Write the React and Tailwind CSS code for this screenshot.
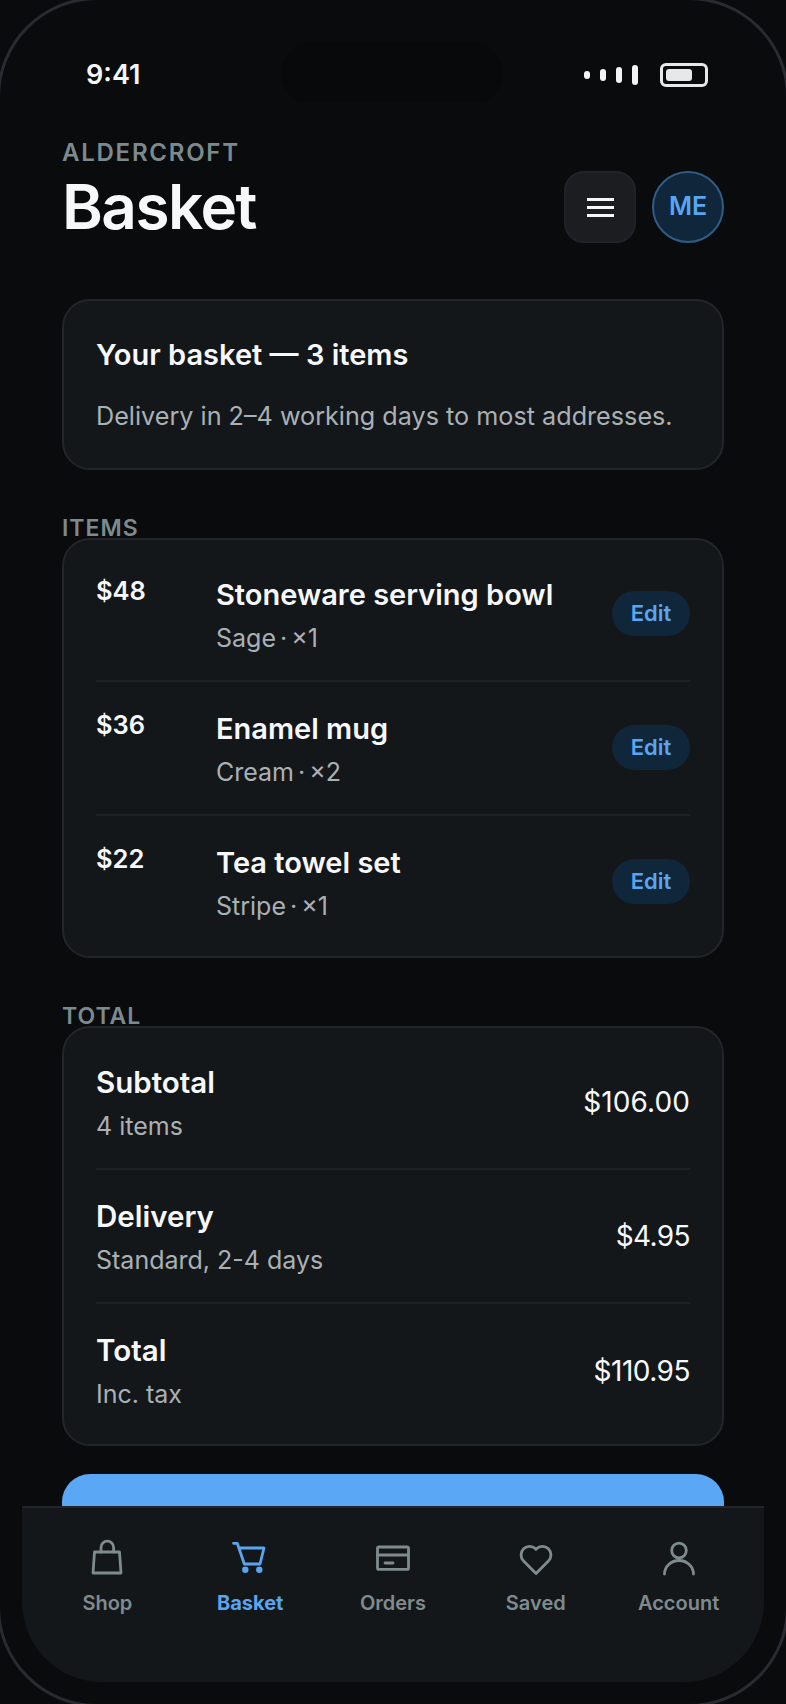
const items = [
  { price: "$48", name: "Stoneware serving bowl", meta: "Sage · ×1" },
  { price: "$36", name: "Enamel mug", meta: "Cream · ×2" },
  { price: "$22", name: "Tea towel set", meta: "Stripe · ×1" },
];

const totals = [
  { label: "Subtotal", meta: "4 items", value: "$106.00", track: "tracking-[0.1px]" },
  { label: "Delivery", meta: "Standard, 2-4 days", value: "$4.95", track: "tracking-[-0.6px]" },
  { label: "Total", meta: "Inc. tax", value: "$110.95", track: "tracking-[-0.5px]" },
];

function Icon({ children }) {
  return (
    <svg
      width="40"
      height="40"
      viewBox="0 0 40 40"
      fill="none"
      stroke="currentColor"
      strokeWidth="2.8"
      strokeLinecap="round"
      strokeLinejoin="round"
    >
      {children}
    </svg>
  );
}

const tabs = [
  {
    label: "Shop",
    icon: (
      <>
        <path d="M7.5 14H32.5L34 35H6Z" />
        <path d="M14 14V9.5a6.3 6.3 0 0 1 12.6 0V14" />
      </>
    ),
  },
  {
    label: "Basket",
    active: true,
    icon: (
      <>
        <path d="M3.5 5.3H7.3L14.3 26H30L34 10H8.7" />
        <circle cx="15.3" cy="31.7" r="3.2" fill="currentColor" stroke="none" />
        <circle cx="29.3" cy="31.7" r="3.2" fill="currentColor" stroke="none" />
      </>
    ),
  },
  {
    label: "Orders",
    icon: (
      <>
        <rect x="4.5" y="9" width="31" height="22.4" rx="1.5" />
        <path d="M4.5 17H35.5" />
        <path d="M12 25H20" />
      </>
    ),
  },
  {
    label: "Saved",
    icon: (
      <path d="M20 35.5 7.6 23a8.6 8.6 0 0 1 0-12.2 8.5 8.5 0 0 1 12 0l.4.6.4-.6a8.5 8.5 0 0 1 12 0 8.6 8.6 0 0 1 0 12.2Z" />
    ),
  },
  {
    label: "Account",
    icon: (
      <>
        <circle cx="20" cy="12.5" r="7.3" />
        <path d="M5.5 36a14.5 13.5 0 0 1 29 0" />
      </>
    ),
  },
];

function Row({ children, last }) {
  return (
    <div className={`flex h-[134px] ${last ? "" : "border-b-2 border-[#1e2226]"}`}>
      {children}
    </div>
  );
}

export default function App() {
  return (
    <div className="relative h-[1704px] w-[786px] overflow-hidden bg-[#090b0d] p-[3px] font-['Inter',sans-serif]">
      {/* Device outline, its straight sides fall just off the page */}
      <div className="pointer-events-none absolute -inset-[3px] rounded-[100px] border-[3px] border-[#2a2a30]" />

      {/* Camera cutout */}
      <div className="absolute left-[281px] top-[43px] h-[60px] w-[222px] rounded-full bg-[#08090b]" />

      {/* Status bar */}
      <div className="relative flex items-center justify-between pl-[83px] pr-[75px] pt-[52px]">
        <span className="text-[27px] font-semibold leading-[40px] text-[#f5f6f8]">9:41</span>
        <div className="flex items-center gap-[22px]">
          <div className="flex items-center gap-[10px]">
            <span className="h-[8px] w-[6px] rounded-full bg-[#f2f4f6]" />
            <span className="h-[12px] w-[6px] rounded-full bg-[#f2f4f6]" />
            <span className="h-[16px] w-[6px] rounded-full bg-[#f2f4f6]" />
            <span className="h-[20px] w-[6px] rounded-full bg-[#f2f4f6]" />
          </div>
          <div className="flex h-[24px] w-[48px] items-center rounded-[6px] border-[3px] border-[#e6e8ea] p-[3px]">
            <div className="h-full w-[26px] rounded-[3px] bg-[#e6e8ea]" />
          </div>
        </div>
      </div>

      {/* Header */}
      <div className="relative flex items-end justify-between px-[59px] pt-[43px]">
        <div>
          <div className="text-[24px] font-semibold leading-[30px] tracking-[1.75px] text-[#7d8a8d]">ALDERCROFT</div>
          <h1 className="mt-[3px] text-[62px] font-semibold leading-[72px] tracking-[-1.5px] text-[#f7f8fa]">Basket</h1>
        </div>
        <div className="flex items-center gap-[16px]">
          <button className="flex h-[72px] w-[72px] flex-col items-center justify-center gap-[5px] rounded-[20px] border-2 border-[#202328] bg-[#1b1d21]">
            <span className="h-[3px] w-[27px] bg-[#f5f6f8]" />
            <span className="h-[3px] w-[27px] bg-[#f5f6f8]" />
            <span className="h-[3px] w-[27px] bg-[#f5f6f8]" />
          </button>
          <div className="flex h-[72px] w-[72px] items-center justify-center rounded-full border-2 border-[#2f5d85] bg-[#10263a] text-[25px] font-semibold text-[#5aa5f0]">
            ME
          </div>
        </div>
      </div>

      {/* Content */}
      <div className="px-[59px] pt-[56px]">
        <div className="rounded-[28px] border-2 border-[#22252a] bg-[#14171a] px-[32px] pb-[34px] pt-[36px]">
          <h2 className="text-[29px] font-semibold leading-[36px] text-[#f7f8fa]">Your basket — 3 items</h2>
          <p className="mt-[25px] text-[25.2px] leading-[36px] text-[#a9b1b5]">Delivery in 2–4 working days to most addresses.</p>
        </div>

        <div className="mt-[48px] text-[23px] font-semibold leading-[20px] tracking-[1px] text-[#7d8a8d]">ITEMS</div>
        <div className="rounded-[28px] border-2 border-[#22252a] bg-[#14171a] px-[32px] pb-[6px] pt-[8px]">
          {items.map((item, i) => (
            <Row key={item.name} last={i === items.length - 1}>
              <div className="w-[120px] pt-[25px] text-[25.5px] font-semibold leading-[36px] text-[#f7f8fa]">{item.price}</div>
              <div className="flex-1 pt-[29px]">
                <div className="text-[29px] font-semibold leading-[36px] text-[#f7f8fa]">{item.name}</div>
                <div className="mt-[8px] text-[25px] leading-[34px] text-[#a9b1b5] [word-spacing:-3px]">{item.meta}</div>
              </div>
              <div className="pt-[43px]">
                <span className="flex h-[45px] w-[78px] items-center justify-center rounded-full bg-[#10263a] text-[22px] font-semibold text-[#5aa5f0]">Edit</span>
              </div>
            </Row>
          ))}
        </div>

        <div className="mt-[48px] text-[23px] font-semibold leading-[20px] tracking-[1px] text-[#7d8a8d]">TOTAL</div>
        <div className="rounded-[28px] border-2 border-[#22252a] bg-[#14171a] px-[32px] pb-[6px] pt-[8px]">
          {totals.map((t, i) => (
            <Row key={t.label} last={i === totals.length - 1}>
              <div className="flex-1 pt-[28px]">
                <div className="text-[29.5px] font-semibold leading-[36px] text-[#f7f8fa]">{t.label}</div>
                <div className="mt-[9px] text-[25px] leading-[34px] text-[#a9b1b5]">{t.meta}</div>
              </div>
              <div className={`flex items-center text-[28px] text-[#f7f8fa] ${t.track}`}>{t.value}</div>
            </Row>
          ))}
        </div>

        <button className="mt-[28px] h-[72px] w-full rounded-[28px] bg-[#5aa7f5]" />
      </div>

      {/* Tab bar */}
      <nav className="absolute bottom-[22px] left-[22px] right-[22px] flex h-[176px] rounded-b-[80px] border-t-2 border-[#22252a] bg-[#14171a] px-[14px] pt-[30px]">
        {tabs.map((tab) => (
          <div
            key={tab.label}
            className={`flex flex-1 flex-col items-center ${tab.active ? "text-[#5aa5f0]" : "text-[#7f8b8f]"}`}
          >
            <Icon>{tab.icon}</Icon>
            <span className={`mt-[12px] text-[20px] leading-[26px] ${tab.active ? "font-bold" : "font-semibold"}`}>{tab.label}</span>
          </div>
        ))}
      </nav>
    </div>
  );
}
